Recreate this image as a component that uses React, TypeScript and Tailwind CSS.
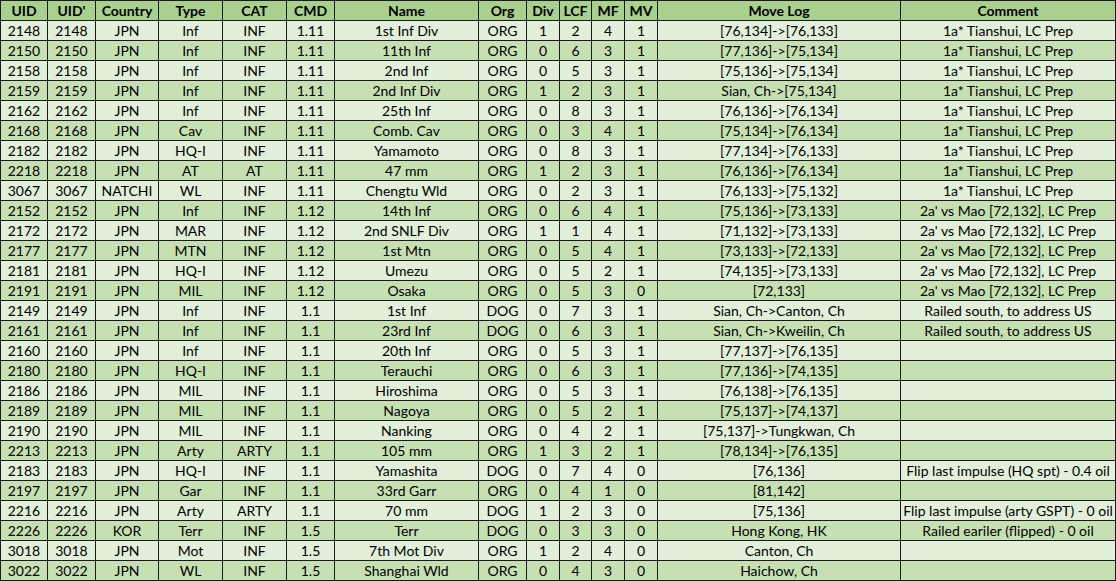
type Row = [string, string, string, string, string, string, string, string, string, string, string, string, string, string]

const headers = ['UID', "UID'", 'Country', 'Type', 'CAT', 'CMD', 'Name', 'Org', 'Div', 'LCF', 'MF', 'MV', 'Move Log', 'Comment']

const c1 = '1a* Tianshui, LC Prep'
const c2 = "2a' vs Mao [72,132], LC Prep"
const c3 = 'Railed south, to address US'

const rows: Row[] = [
  ['2148', '2148', 'JPN', 'Inf', 'INF', '1.11', '1st Inf Div', 'ORG', '1', '2', '4', '1', '[76,134]->[76,133]', c1],
  ['2150', '2150', 'JPN', 'Inf', 'INF', '1.11', '11th Inf', 'ORG', '0', '6', '3', '1', '[77,136]->[75,134]', c1],
  ['2158', '2158', 'JPN', 'Inf', 'INF', '1.11', '2nd Inf', 'ORG', '0', '5', '3', '1', '[75,136]->[75,134]', c1],
  ['2159', '2159', 'JPN', 'Inf', 'INF', '1.11', '2nd Inf Div', 'ORG', '1', '2', '3', '1', 'Sian, Ch->[75,134]', c1],
  ['2162', '2162', 'JPN', 'Inf', 'INF', '1.11', '25th Inf', 'ORG', '0', '8', '3', '1', '[76,136]->[76,134]', c1],
  ['2168', '2168', 'JPN', 'Cav', 'INF', '1.11', 'Comb. Cav', 'ORG', '0', '3', '4', '1', '[75,134]->[76,134]', c1],
  ['2182', '2182', 'JPN', 'HQ-I', 'INF', '1.11', 'Yamamoto', 'ORG', '0', '8', '3', '1', '[77,134]->[76,133]', c1],
  ['2218', '2218', 'JPN', 'AT', 'AT', '1.11', '47 mm', 'ORG', '1', '2', '3', '1', '[76,136]->[76,134]', c1],
  ['3067', '3067', 'NATCHI', 'WL', 'INF', '1.11', 'Chengtu Wld', 'ORG', '0', '2', '3', '1', '[76,133]->[75,132]', c1],
  ['2152', '2152', 'JPN', 'Inf', 'INF', '1.12', '14th Inf', 'ORG', '0', '6', '4', '1', '[75,136]->[73,133]', c2],
  ['2172', '2172', 'JPN', 'MAR', 'INF', '1.12', '2nd SNLF Div', 'ORG', '1', '1', '4', '1', '[71,132]->[73,133]', c2],
  ['2177', '2177', 'JPN', 'MTN', 'INF', '1.12', '1st Mtn', 'ORG', '0', '5', '4', '1', '[73,133]->[72,133]', c2],
  ['2181', '2181', 'JPN', 'HQ-I', 'INF', '1.12', 'Umezu', 'ORG', '0', '5', '2', '1', '[74,135]->[73,133]', c2],
  ['2191', '2191', 'JPN', 'MIL', 'INF', '1.12', 'Osaka', 'ORG', '0', '5', '3', '0', '[72,133]', c2],
  ['2149', '2149', 'JPN', 'Inf', 'INF', '1.1', '1st Inf', 'DOG', '0', '7', '3', '1', 'Sian, Ch->Canton, Ch', c3],
  ['2161', '2161', 'JPN', 'Inf', 'INF', '1.1', '23rd Inf', 'DOG', '0', '6', '3', '1', 'Sian, Ch->Kweilin, Ch', c3],
  ['2160', '2160', 'JPN', 'Inf', 'INF', '1.1', '20th Inf', 'ORG', '0', '5', '3', '1', '[77,137]->[76,135]', ''],
  ['2180', '2180', 'JPN', 'HQ-I', 'INF', '1.1', 'Terauchi', 'ORG', '0', '6', '3', '1', '[77,136]->[74,135]', ''],
  ['2186', '2186', 'JPN', 'MIL', 'INF', '1.1', 'Hiroshima', 'ORG', '0', '5', '3', '1', '[76,138]->[76,135]', ''],
  ['2189', '2189', 'JPN', 'MIL', 'INF', '1.1', 'Nagoya', 'ORG', '0', '5', '2', '1', '[75,137]->[74,137]', ''],
  ['2190', '2190', 'JPN', 'MIL', 'INF', '1.1', 'Nanking', 'ORG', '0', '4', '2', '1', '[75,137]->Tungkwan, Ch', ''],
  ['2213', '2213', 'JPN', 'Arty', 'ARTY', '1.1', '105 mm', 'ORG', '1', '3', '2', '1', '[78,134]->[76,135]', ''],
  ['2183', '2183', 'JPN', 'HQ-I', 'INF', '1.1', 'Yamashita', 'DOG', '0', '7', '4', '0', '[76,136]', 'Flip last impulse (HQ spt) - 0.4 oil'],
  ['2197', '2197', 'JPN', 'Gar', 'INF', '1.1', '33rd Garr', 'ORG', '0', '4', '1', '0', '[81,142]', ''],
  ['2216', '2216', 'JPN', 'Arty', 'ARTY', '1.1', '70 mm', 'DOG', '1', '2', '3', '0', '[75,136]', 'Flip last impulse (arty GSPT) - 0 oil'],
  ['2226', '2226', 'KOR', 'Terr', 'INF', '1.5', 'Terr', 'DOG', '0', '3', '3', '0', 'Hong Kong, HK', 'Railed eariler (flipped) - 0 oil'],
  ['3018', '3018', 'JPN', 'Mot', 'INF', '1.5', '7th Mot Div', 'ORG', '1', '2', '4', '0', 'Canton, Ch', ''],
  ['3022', '3022', 'JPN', 'WL', 'INF', '1.5', 'Shanghai Wld', 'ORG', '0', '4', '3', '0', 'Haichow, Ch', ''],
]

export default function App() {
  return (
    <div className="w-[1116px] h-[581px] bg-white" style={{ fontFamily: 'Lato, "Liberation Sans", sans-serif' }}>
      <div className="grid grid-cols-[47px_48px_63px_64px_64px_48px_144px_48px_33px_32px_33px_33px_243px_215px] border-l border-t border-[#1a1a1a] w-max text-[14px] text-black">
        {headers.map((h) => (
          <div
            key={h}
            className="h-5 border-r border-b border-[#1a1a1a] bg-[#a9d08e] font-bold flex items-center justify-center whitespace-nowrap leading-none"
          >
            {h}
          </div>
        ))}
        {rows.map((row, i) =>
          row.map((cell, j) => (
            <div
              key={`${i}-${j}`}
              className={`h-5 border-r border-b border-[#1a1a1a] flex items-center justify-center whitespace-nowrap leading-none ${
                i % 2 === 0 ? 'bg-[#e2efda]' : 'bg-[#c6e0b4]'
              }`}
            >
              {cell}
            </div>
          ))
        )}
      </div>
    </div>
  )
}
